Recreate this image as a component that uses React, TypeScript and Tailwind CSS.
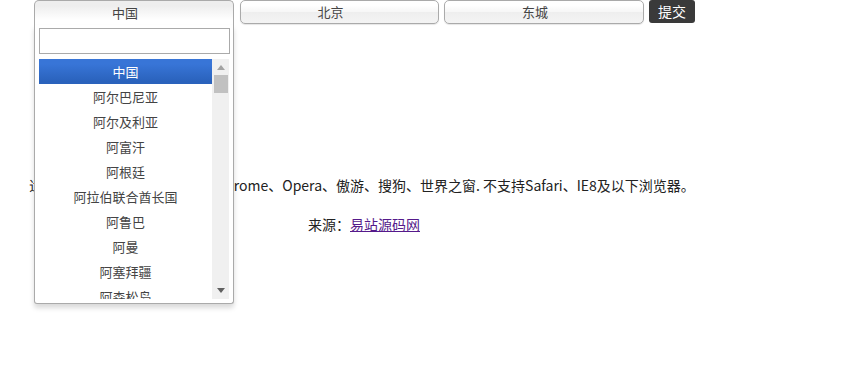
import React from "react";

const COUNTRIES = [
  "中国",
  "阿尔巴尼亚",
  "阿尔及利亚",
  "阿富汗",
  "阿根廷",
  "阿拉伯联合酋长国",
  "阿鲁巴",
  "阿曼",
  "阿塞拜疆",
  "阿森松岛",
];

function ClosedSelect({ label, width }: { label: string; width: string }) {
  return (
    <div
      className={`${width} h-[24px] rounded-[5px] border border-[#aaa] bg-[linear-gradient(#fff_20%,#f6f6f6_50%,#eee_52%,#f4f4f4_100%)] shadow-[0_1px_1px_rgba(0,0,0,0.1)] pl-[8px] pr-[26px] text-center text-[13px] leading-[22px] text-[#444]`}
    >
      {label}
    </div>
  );
}

function Scrollbar() {
  return (
    <div className="w-[17px] shrink-0 bg-[#f0f0f0] flex flex-col items-center">
      <div className="h-[16px] w-full flex items-center justify-center">
        <svg width="8" height="5" viewBox="0 0 8 5">
          <path d="M0 5 L4 0 L8 5 Z" fill="#a3a3a3" />
        </svg>
      </div>
      <div className="h-[18px] w-[14px] bg-[#c1c1c1]" />
      <div className="flex-1" />
      <div className="h-[17px] w-full flex items-center justify-center">
        <svg width="8" height="5" viewBox="0 0 8 5">
          <path d="M0 0 L8 0 L4 5 Z" fill="#606060" />
        </svg>
      </div>
    </div>
  );
}

function OpenSelect() {
  return (
    <div className="relative w-[200px]">
      <div className="h-[25px] rounded-t-[5px] border border-b-0 border-[#aaa] bg-[linear-gradient(#eee_20%,#fff_80%)] pl-[8px] pr-[26px] text-center text-[13px] leading-[24px] text-[#444]">
        中国
      </div>
      <div className="absolute left-0 top-[25px] z-10 w-full rounded-b-[3px] border border-t-0 border-[#aaa] bg-white shadow-[0_4px_5px_rgba(0,0,0,0.15)]">
        <div className="pl-[4px] pr-[3px] pt-[3px]">
          <input className="block h-[26px] w-full border border-[#aaa] bg-white outline-none" />
        </div>
        <div className="ml-[4px] mr-[4px] mt-[5px] mb-[4px] flex h-[240px] overflow-hidden">
          <ul className="flex-1">
            {COUNTRIES.map((c, i) => (
              <li
                key={c}
                className={
                  i === 0
                    ? "h-[25px] px-[6px] py-[5px] text-center text-[13px] leading-[15px] text-white bg-[linear-gradient(#3875d7_20%,#2a62bc_90%)]"
                    : "h-[25px] px-[6px] py-[5px] text-center text-[13px] leading-[15px] text-[#444]"
                }
              >
                {c}
              </li>
            ))}
          </ul>
          <Scrollbar />
        </div>
      </div>
    </div>
  );
}

export default function App() {
  return (
    <div className="min-h-screen bg-white text-[#333] font-['Noto_Sans_CJK_SC',sans-serif]">
      <div className="flex items-start pl-[34px]">
        <OpenSelect />
        <div className="ml-[6px]">
          <ClosedSelect label="北京" width="w-[199px]" />
        </div>
        <div className="ml-[5px]">
          <ClosedSelect label="东城" width="w-[200px]" />
        </div>
        <button className="ml-[5px] h-[23px] w-[46px] rounded-[3px] bg-[#3a3a3a] text-[14px] leading-[23px] text-white">
          提交
        </button>
      </div>
      <p className="mt-[150px] w-[724px] text-center text-[14px] leading-[20px] text-[#222]">
        适用浏览器：IE9+、FireFox、Chrome、Opera、傲游、搜狗、世界之窗. 不支持Safari、IE8及以下浏览器。
      </p>
      <p className="mt-[19px] w-[728px] text-center text-[14px] leading-[20px] text-[#222]">
        来源：
        <a href="#" className="text-[#551a8b] underline">
          易站源码网
        </a>
      </p>
    </div>
  );
}
